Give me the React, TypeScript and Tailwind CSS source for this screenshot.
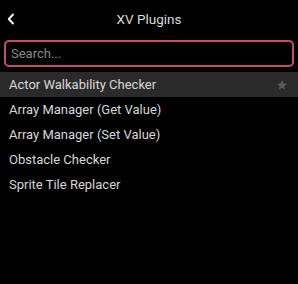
const plugins = [
  "Actor Walkability Checker",
  "Array Manager (Get Value)",
  "Array Manager (Set Value)",
  "Obstacle Checker",
  "Sprite Tile Replacer",
];

export default function App() {
  return (
    <div className="w-[298px] h-[284px] bg-black text-[#d8d8d8] font-['Roboto',sans-serif] overflow-hidden">
      <div className="relative h-[40px] flex items-center justify-center">
        <svg
          className="absolute left-[7px] top-[13px]"
          width="8"
          height="12"
          viewBox="0 0 8 12"
          fill="none"
        >
          <path d="M6 1.5 L1.8 6 L6 10.5" stroke="#f2f2f2" strokeWidth="2" strokeLinecap="round" strokeLinejoin="round" />
        </svg>
        <span className="text-[13.5px] text-[#dcdcdc] -mt-[1px]">XV Plugins</span>
      </div>
      <div className="px-[4px]">
        <input
          placeholder="Search..."
          className="w-full h-[27px] bg-black border-2 border-[#c64a6c] rounded-[5px] px-[5px] text-[13px] text-white placeholder:text-[#8a8a8a] outline-none"
        />
      </div>
      <ul className="mt-[5px]">
        {plugins.map((name, i) => (
          <li
            key={name}
            className={
              "h-[25px] flex items-center justify-between pl-[9px] pr-[10px] text-[13px] " +
              (i === 0 ? "bg-[#2a2a2a]" : "")
            }
          >
            <span>{name}</span>
            {i === 0 && (
              <svg width="12" height="12" viewBox="0 0 24 24" fill="#5a5a5a">
                <path d="M12 2l2.9 6.9 7.1.6-5.4 4.7 1.7 7-6.3-3.9-6.3 3.9 1.7-7L2 9.5l7.1-.6z" />
              </svg>
            )}
          </li>
        ))}
      </ul>
    </div>
  );
}
